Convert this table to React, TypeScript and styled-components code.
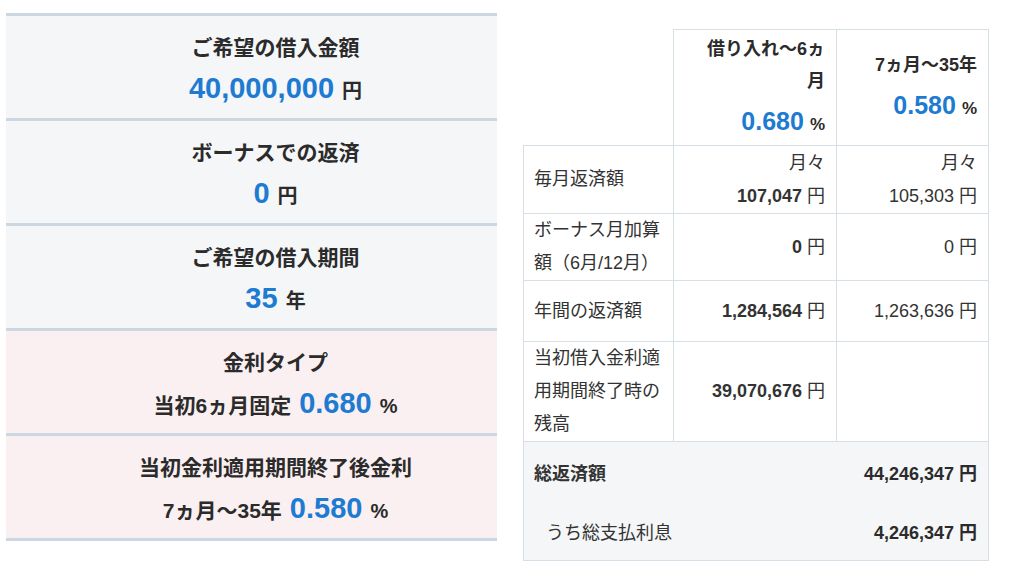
import React from "react";
import styled, { createGlobalStyle } from "styled-components";

const Global = createGlobalStyle`
  html, body { margin: 0; padding: 0; background: #ffffff; }
  body {
    font-family: "Liberation Sans", "Noto Sans CJK JP", sans-serif;
    color: #2e2e2e;
  }
`;

const BLUE = "#1d7bd1";
const PANEL_LINE = "#cdd7e1";
const CELL_LINE = "#d6dee6";

const Page = styled.div`
  display: flex;
  align-items: flex-start;
  gap: 26px;
  padding-left: 6px;
  width: 1024px;
  height: 576px;
  box-sizing: border-box;
`;

const Panel = styled.div`
  width: 491px;
  margin-top: 13px;
  border-top: 3px solid ${PANEL_LINE};
`;

const Section = styled.div<{ $tone: "gray" | "pink" }>`
  height: 105px;
  box-sizing: border-box;
  border-bottom: 3px solid ${PANEL_LINE};
  background: ${(p) => (p.$tone === "pink" ? "#fbf0f1" : "#f5f6f8")};
  padding: 17px 0 0 48px;
  display: flex;
  flex-direction: column;
  align-items: center;
`;

const Title = styled.div`
  font-size: 21px;
  font-weight: 700;
  line-height: 30px;
  color: #2b2b2b;
`;

const ValueLine = styled.div`
  margin-top: 5px;
  display: flex;
  align-items: baseline;
  gap: 8px;
  line-height: 40px;
`;

const Big = styled.span`
  font-size: 29px;
  font-weight: 700;
  color: ${BLUE};
`;

const Unit = styled.span`
  font-size: 20px;
  font-weight: 700;
  color: #2b2b2b;
`;

const Prefix = styled.span`
  font-size: 21px;
  font-weight: 700;
  color: #2b2b2b;
`;

const Table = styled.table`
  margin-top: 29px;
  border-collapse: collapse;
  table-layout: fixed;
  width: 465px;
  font-size: 18px;
  color: #333;
`;

const Blank = styled.th`
  border: none;
`;

const HeadCell = styled.th`
  border: 1px solid ${CELL_LINE};
  text-align: right;
  vertical-align: middle;
  padding: 0 11px;
  font-weight: 700;
  font-size: 18px;
  line-height: 32px;
  color: #2b2b2b;
`;

const HeadRate = styled.div`
  margin-top: 6px;
  line-height: 36px;
  display: flex;
  justify-content: flex-end;
  align-items: baseline;
  gap: 6px;
`;

const RateNum = styled.span`
  font-size: 25px;
  font-weight: 700;
  color: ${BLUE};
`;

const Pct = styled.span`
  font-size: 17px;
  font-weight: 700;
  color: #2b2b2b;
`;

const Row = styled.tr<{ $h: number }>`
  height: ${(p) => p.$h}px;
`;

const Label = styled.td`
  border: 1px solid ${CELL_LINE};
  padding: 0 10px;
  text-align: left;
  vertical-align: middle;
  line-height: 33px;
`;

const Val = styled.td`
  border: 1px solid ${CELL_LINE};
  padding: 0 11px;
  text-align: right;
  vertical-align: middle;
  line-height: 33px;
`;

const Num = styled.span<{ $bold?: boolean }>`
  font-weight: ${(p) => (p.$bold ? 700 : 400)};
`;

const SummaryCell = styled.td`
  border: 1px solid ${CELL_LINE};
  background: #f5f6f8;
  padding: 0;
`;

const SummaryLine = styled.div<{ $indent?: boolean }>`
  height: 59px;
  display: flex;
  align-items: center;
  justify-content: space-between;
  padding: 0 11px 0 ${(p) => (p.$indent ? 22 : 10)}px;
`;

const SumLabel = styled.span<{ $bold?: boolean }>`
  font-weight: ${(p) => (p.$bold ? 700 : 400)};
`;

const SumValue = styled.span`
  font-weight: 700;
  color: #2b2b2b;
`;

export default function App() {
  return (
    <>
      <Global />
      <Page>
        <Panel>
          <Section $tone="gray">
            <Title>ご希望の借入金額</Title>
            <ValueLine>
              <Big>40,000,000</Big>
              <Unit>円</Unit>
            </ValueLine>
          </Section>
          <Section $tone="gray">
            <Title>ボーナスでの返済</Title>
            <ValueLine>
              <Big>0</Big>
              <Unit>円</Unit>
            </ValueLine>
          </Section>
          <Section $tone="gray">
            <Title>ご希望の借入期間</Title>
            <ValueLine>
              <Big>35</Big>
              <Unit>年</Unit>
            </ValueLine>
          </Section>
          <Section $tone="pink">
            <Title>金利タイプ</Title>
            <ValueLine>
              <Prefix>当初6ヵ月固定</Prefix>
              <Big>0.680</Big>
              <Unit>%</Unit>
            </ValueLine>
          </Section>
          <Section $tone="pink">
            <Title>当初金利適用期間終了後金利</Title>
            <ValueLine>
              <Prefix>7ヵ月〜35年</Prefix>
              <Big>0.580</Big>
              <Unit>%</Unit>
            </ValueLine>
          </Section>
        </Panel>

        <Table>
          <colgroup>
            <col style={{ width: 150 }} />
            <col style={{ width: 163 }} />
            <col style={{ width: 152 }} />
          </colgroup>
          <thead>
            <Row $h={116}>
              <Blank />
              <HeadCell>
                借り入れ〜6ヵ
                <br />月
                <HeadRate>
                  <RateNum>0.680</RateNum>
                  <Pct>%</Pct>
                </HeadRate>
              </HeadCell>
              <HeadCell>
                7ヵ月〜35年
                <HeadRate>
                  <RateNum>0.580</RateNum>
                  <Pct>%</Pct>
                </HeadRate>
              </HeadCell>
            </Row>
          </thead>
          <tbody>
            <Row $h={68}>
              <Label>毎月返済額</Label>
              <Val>
                月々
                <br />
                <Num $bold>107,047</Num> 円
              </Val>
              <Val>
                月々
                <br />
                <Num>105,303</Num> 円
              </Val>
            </Row>
            <Row $h={67}>
              <Label>ボーナス月加算額（6月/12月）</Label>
              <Val>
                <Num $bold>0</Num> 円
              </Val>
              <Val>
                <Num>0</Num> 円
              </Val>
            </Row>
            <Row $h={61}>
              <Label>年間の返済額</Label>
              <Val>
                <Num $bold>1,284,564</Num> 円
              </Val>
              <Val>
                <Num>1,263,636</Num> 円
              </Val>
            </Row>
            <Row $h={100}>
              <Label>当初借入金利適用期間終了時の残高</Label>
              <Val>
                <Num $bold>39,070,676</Num> 円
              </Val>
              <Val />
            </Row>
            <tr>
              <SummaryCell colSpan={3}>
                <SummaryLine>
                  <SumLabel $bold>総返済額</SumLabel>
                  <SumValue>44,246,347 円</SumValue>
                </SummaryLine>
                <SummaryLine $indent>
                  <SumLabel>うち総支払利息</SumLabel>
                  <SumValue>4,246,347 円</SumValue>
                </SummaryLine>
              </SummaryCell>
            </tr>
          </tbody>
        </Table>
      </Page>
    </>
  );
}
